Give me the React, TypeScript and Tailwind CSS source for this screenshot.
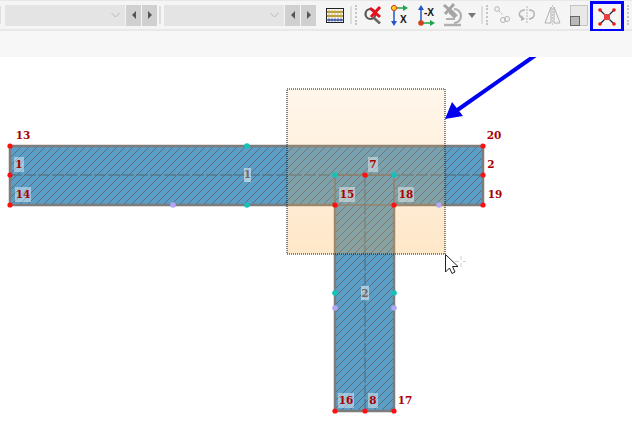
const redNodes = [[10, 146], [10, 175], [10, 205], [483, 146], [483, 175], [483, 205], [335, 205], [394, 205], [365, 175], [335, 411], [365, 411], [394, 411]];
const tealNodes = [[247, 146], [247, 205], [335, 175], [394, 175], [335, 293], [394, 293]];
const lilacNodes = [[173, 205], [439, 205], [335, 308], [394, 308]];

// x, y = text centre
const nodeLabels = [
  { text: "13", x: 23, y: 135 },
  { text: "1", x: 19, y: 164, chip: true },
  { text: "14", x: 23, y: 194, chip: true },
  { text: "20", x: 494, y: 135 },
  { text: "2", x: 491, y: 164 },
  { text: "19", x: 495, y: 194 },
  { text: "7", x: 373, y: 164, chip: true },
  { text: "15", x: 347, y: 194, chip: true },
  { text: "18", x: 406, y: 194, chip: true },
  { text: "16", x: 346, y: 400, chip: true },
  { text: "8", x: 373, y: 400, chip: true },
  { text: "17", x: 405, y: 400 },
];

function Gripper() {
  return <div className="h-[20px] w-[2px] border-l-2 border-dotted border-[#c4c4c4]" />;
}

function Separator() {
  return <div className="h-[18px] w-[2px] bg-[#dedede]" />;
}

function Stepper() {
  return (
    <div className="ml-px flex gap-px">
      <div className="flex h-[21px] w-[15px] items-center justify-center bg-[#d0d0d0]">
        <div className="h-0 w-0 border-y-[4px] border-r-[4px] border-y-transparent border-r-[#555555]" />
      </div>
      <div className="flex h-[21px] w-[15px] items-center justify-center bg-[#d0d0d0]">
        <div className="h-0 w-0 border-y-[4px] border-l-[4px] border-y-transparent border-l-[#555555]" />
      </div>
    </div>
  );
}

function Combo() {
  return (
    <div className="flex h-[21px] w-[120px] items-center justify-end bg-[#e4e4e4] pr-[5px]">
      <svg width="9" height="6" viewBox="0 0 9 6" fill="none" stroke="#b8b8b8">
        <path d="M0.5 1 L4.5 5 L8.5 1" />
      </svg>
    </div>
  );
}

function Abacus() {
  const rows = [
    { y: 4, c: "#c9a42c" },
    { y: 8, c: "#c9a42c" },
    { y: 12, c: "#4a62b8" },
  ];
  return (
    <svg width="18" height="15" viewBox="0 0 18 15" className="ml-[10px]">
      <rect x="0.5" y="0.5" width="17" height="14" fill="#f6f6f6" stroke="#222" strokeWidth="1" />
      {rows.map((r) => (
        <g key={r.y}>
          <path d={`M0 ${r.y}H18`} stroke="#333" />
          {[3, 6, 9, 12, 15].map((x) => (
            <circle key={x} cx={x} cy={r.y} r="1.4" fill={r.c} />
          ))}
        </g>
      ))}
    </svg>
  );
}

function SearchCross() {
  return (
    <svg width="18" height="18" viewBox="0 0 18 18" className="ml-[7px]">
      <circle cx="6.5" cy="8" r="5" fill="none" stroke="#555" strokeWidth="2.2" />
      <path d="M10 12 L16 17.5" stroke="#666" strokeWidth="2.6" />
      <path d="M6 2 L16 11 M16 1 L7 11" stroke="#e8101c" strokeWidth="3" />
    </svg>
  );
}

function AxisFlip() {
  return (
    <svg width="18" height="23" viewBox="0 0 18 23" className="ml-[8px]">
      <path d="M4 4H14" stroke="#1fa64a" strokeWidth="1.5" />
      <path d="M13 1 L18 4 L13 7Z" fill="#1fa64a" />
      <path d="M4 6V19" stroke="#2456c8" strokeWidth="1.5" />
      <path d="M1 17 L4 22 L7 17Z" fill="#2456c8" />
      <circle cx="4" cy="4" r="2.6" fill="#f6d21a" stroke="#d83a20" />
      <text x="10" y="19" fontFamily="'Liberation Sans', sans-serif" fontWeight="700" fontSize="10" fill="#111">X</text>
    </svg>
  );
}

function AxisMinus() {
  return (
    <svg width="18" height="23" viewBox="0 0 18 23" className="ml-[9px]">
      <path d="M4 5V18" stroke="#2456c8" strokeWidth="1.5" />
      <path d="M1 6 L4 1 L7 6Z" fill="#2456c8" />
      <path d="M5 19H14" stroke="#1fa64a" strokeWidth="1.5" />
      <path d="M13 16 L18 19 L13 22Z" fill="#1fa64a" />
      <circle cx="4" cy="19" r="2.8" fill="#d2401c" />
      <text x="7" y="12" fontFamily="'Liberation Sans', sans-serif" fontWeight="700" fontSize="10" fill="#111">-X</text>
    </svg>
  );
}

function Microscope() {
  return (
    <svg width="22" height="24" viewBox="0 0 22 24" className="ml-[7px]">
      <path d="M2 22H19" stroke="#b0b0b0" strokeWidth="2.4" />
      <path d="M12 6 A7 7 0 0 1 12 20" fill="none" stroke="#b0b0b0" strokeWidth="2.2" />
      <path d="M8 8 L14 14" stroke="#a8a8a8" strokeWidth="5" />
      <path d="M4 16H13" stroke="#b0b0b0" strokeWidth="2" />
      <path d="M2 2 L12 11 M12 1 L3 11" stroke="#a4a4a4" strokeWidth="3" />
    </svg>
  );
}

function Connect() {
  return (
    <svg width="16" height="18" viewBox="0 0 16 18" fill="none" className="ml-[6px]" stroke="#b4b4b4">
      <circle cx="3" cy="3" r="2.3" />
      <path d="M5 5 L9 9" strokeDasharray="2 1" />
      <circle cx="9" cy="14" r="2.5" />
      <circle cx="13" cy="13" r="2.5" />
    </svg>
  );
}

function Rotate() {
  return (
    <svg width="17" height="18" viewBox="0 0 17 18" fill="none" className="ml-[8px]" stroke="#b4b4b4" strokeWidth="1.5">
      <path d="M9 0V18" strokeDasharray="2 1" strokeWidth="1" />
      <path d="M5 12 C-1 10 1 4 7 4 M11 4 C18 4 18 12 11 13" />
      <path d="M3 9 L7 13 L3 15Z" fill="#b4b4b4" stroke="none" />
    </svg>
  );
}

function Mirror() {
  return (
    <svg width="17" height="20" viewBox="0 0 17 20" fill="none" className="ml-[9px]" stroke="#b0b0b0">
      <path d="M7 2 L1 18 H7Z" />
      <path d="M10 2 L16 18 H10Z" />
      <path d="M8.5 0V20" strokeDasharray="2 1" stroke="#c8c8c8" />
    </svg>
  );
}

function Select() {
  return (
    <svg width="18" height="21" viewBox="0 0 18 21" className="ml-[9px]">
      <rect x="0.5" y="0.5" width="17" height="20" fill="#e8e8e8" stroke="#9a9a9a" strokeDasharray="1 1" />
      <rect x="0.5" y="11.5" width="9" height="9" fill="#b8b8b8" stroke="#666" />
    </svg>
  );
}

function SplitActive() {
  return (
    <div className="ml-[2px] flex h-[31px] w-[34px] items-center justify-center border-[3px] border-[#0000ff]">
      <svg width="20" height="20" viewBox="0 0 20 20">
        <path d="M3 3 L17 17 M17 3 L3 17" stroke="#222" strokeWidth="1.2" />
        <rect x="7" y="7" width="6" height="6" fill="#e84040" />
        {[[3, 3], [17, 3], [3, 17], [17, 17]].map(([x, y]) => (
          <circle key={`${x}-${y}`} cx={x} cy={y} r="1.8" fill="#e81818" />
        ))}
      </svg>
    </div>
  );
}

function Toolbar() {
  return (
    <div className="flex h-[30px] items-start overflow-visible border-b-2 border-[#e8e8e8] bg-[#f5f5f5]">
      <div className="flex h-[28px] items-center">
        <div className="h-[18px] w-px bg-[#dedede]" />
        <div className="w-1" />
        <Combo />
        <Stepper />
        <div className="ml-[2px]"><Separator /></div>
        <div className="ml-[3px]"><Combo /></div>
        <Stepper />
        <Abacus />
        <div className="ml-[6px]"><Separator /></div>
        <div className="ml-[3px]"><Gripper /></div>
        <SearchCross />
        <AxisFlip />
        <AxisMinus />
        <Microscope />
        <div className="ml-[4px] h-0 w-0 border-x-[4px] border-t-[5px] border-x-transparent border-t-[#777777]" />
        <div className="ml-[5px]"><Separator /></div>
        <div className="ml-[3px]"><Gripper /></div>
        <Connect />
        <Rotate />
        <Mirror />
        <Select />
      </div>
      <SplitActive />
      <div className="ml-[3px] mt-[4px]"><Gripper /></div>
    </div>
  );
}

function Drawing() {
  return (
    <svg width="632" height="427" viewBox="0 0 632 427" className="absolute left-0 top-0">
      <defs>
        <pattern id="hatch" width="8" height="8" patternUnits="userSpaceOnUse">
          <path d="M-2 2 L2 -2 M0 8 L8 0 M6 10 L10 6" stroke="#5c6c78" strokeWidth="1" />
        </pattern>
        <linearGradient id="window" x1="0" y1="0" x2="0" y2="1">
          <stop offset="0" stopColor="#ffaa3c" stopOpacity="0.1" />
          <stop offset="1" stopColor="#ffaa3c" stopOpacity="0.28" />
        </linearGradient>
      </defs>

      <path id="shape" d="M10 146H483V205H394V411H335V205H10Z" fill="#5b9fc8" />
      <path d="M10 146H483V205H394V411H335V205H10Z" fill="url(#hatch)" />
      <path d="M10 175H483M365 175V411" stroke="#56788e" strokeWidth="1.5" strokeDasharray="12 2" />
      <path d="M335 205V175H394V205M335 205H394" fill="none" stroke="#777" strokeWidth="1.5" />
      <path d="M10 146H483V205H394V411H335V205H10Z" fill="none" stroke="#7c7c7c" strokeWidth="2.5" />

      <rect x="287" y="89" width="158" height="165" fill="url(#window)" />

      <rect x="244" y="168" width="7" height="14" fill="#ffffff" fillOpacity="0.5" />
      <rect x="361" y="286" width="8" height="14" fill="#ffffff" fillOpacity="0.5" />
      <text x="247.5" y="178" textAnchor="middle" fontFamily="'DejaVu Serif', serif" fontWeight="700" fontSize="10.5" fill="#6a6a6a">1</text>
      <text x="365" y="297" textAnchor="middle" fontFamily="'DejaVu Serif', serif" fontWeight="700" fontSize="10.5" fill="#6a6a6a">2</text>

      {nodeLabels.map((l) =>
        l.chip ? (
          <rect
            key={`chip-${l.text}`}
            x={l.x - (l.text.length === 2 ? 8 : 5)}
            y={l.y - 7}
            width={l.text.length === 2 ? 16 : 10}
            height={15}
            fill="#ffffff"
            fillOpacity="0.42"
          />
        ) : null,
      )}
      {nodeLabels.map((l) => (
        <text
          key={l.text}
          x={l.x}
          y={l.y + 4}
          textAnchor="middle"
          fontFamily="'DejaVu Serif', serif"
          fontWeight="700"
          fontSize="10.5"
          fill="#a80000"
        >
          {l.text}
        </text>
      ))}

      {redNodes.map(([x, y]) => <circle key={`${x}-${y}`} cx={x} cy={y} r="2.6" fill="#ff0f0f" />)}
      {tealNodes.map(([x, y]) => <circle key={`${x}-${y}`} cx={x} cy={y} r="2.8" fill="#10c4bc" />)}
      {lilacNodes.map(([x, y]) => <circle key={`${x}-${y}`} cx={x} cy={y} r="2.8" fill="#b0a8f4" />)}

      <rect x="287" y="89" width="158" height="165" fill="none" stroke="#111" strokeDasharray="1 1" />

      {/* cursor with faint crosshair */}
      <path d="M445.5 254.5V272L449.5 268L452 273.5L455 272L452.5 266.5H458Z" fill="#ffffff" stroke="#222" />
      <path d="M461 256V260M461 263V267M455 261.5H459M463 261.5H466" stroke="#cfcfcf" />

      {/* blue annotation arrow */}
      <path d="M590 17 L456 111" stroke="#0000f0" strokeWidth="4" />
      <path d="M445 119 L452 102 L463 116Z" fill="#0000f0" />
    </svg>
  );
}

export default function App() {
  return (
    <div className="relative flex h-[427px] w-[632px] flex-col overflow-hidden bg-white">
      <div className="h-px bg-[#e8e8e8]" />
      <Drawing />
      <div className="relative">
        <Toolbar />
      </div>
      <div className="relative h-[26px] bg-[#f7f7f7]" />
    </div>
  );
}
